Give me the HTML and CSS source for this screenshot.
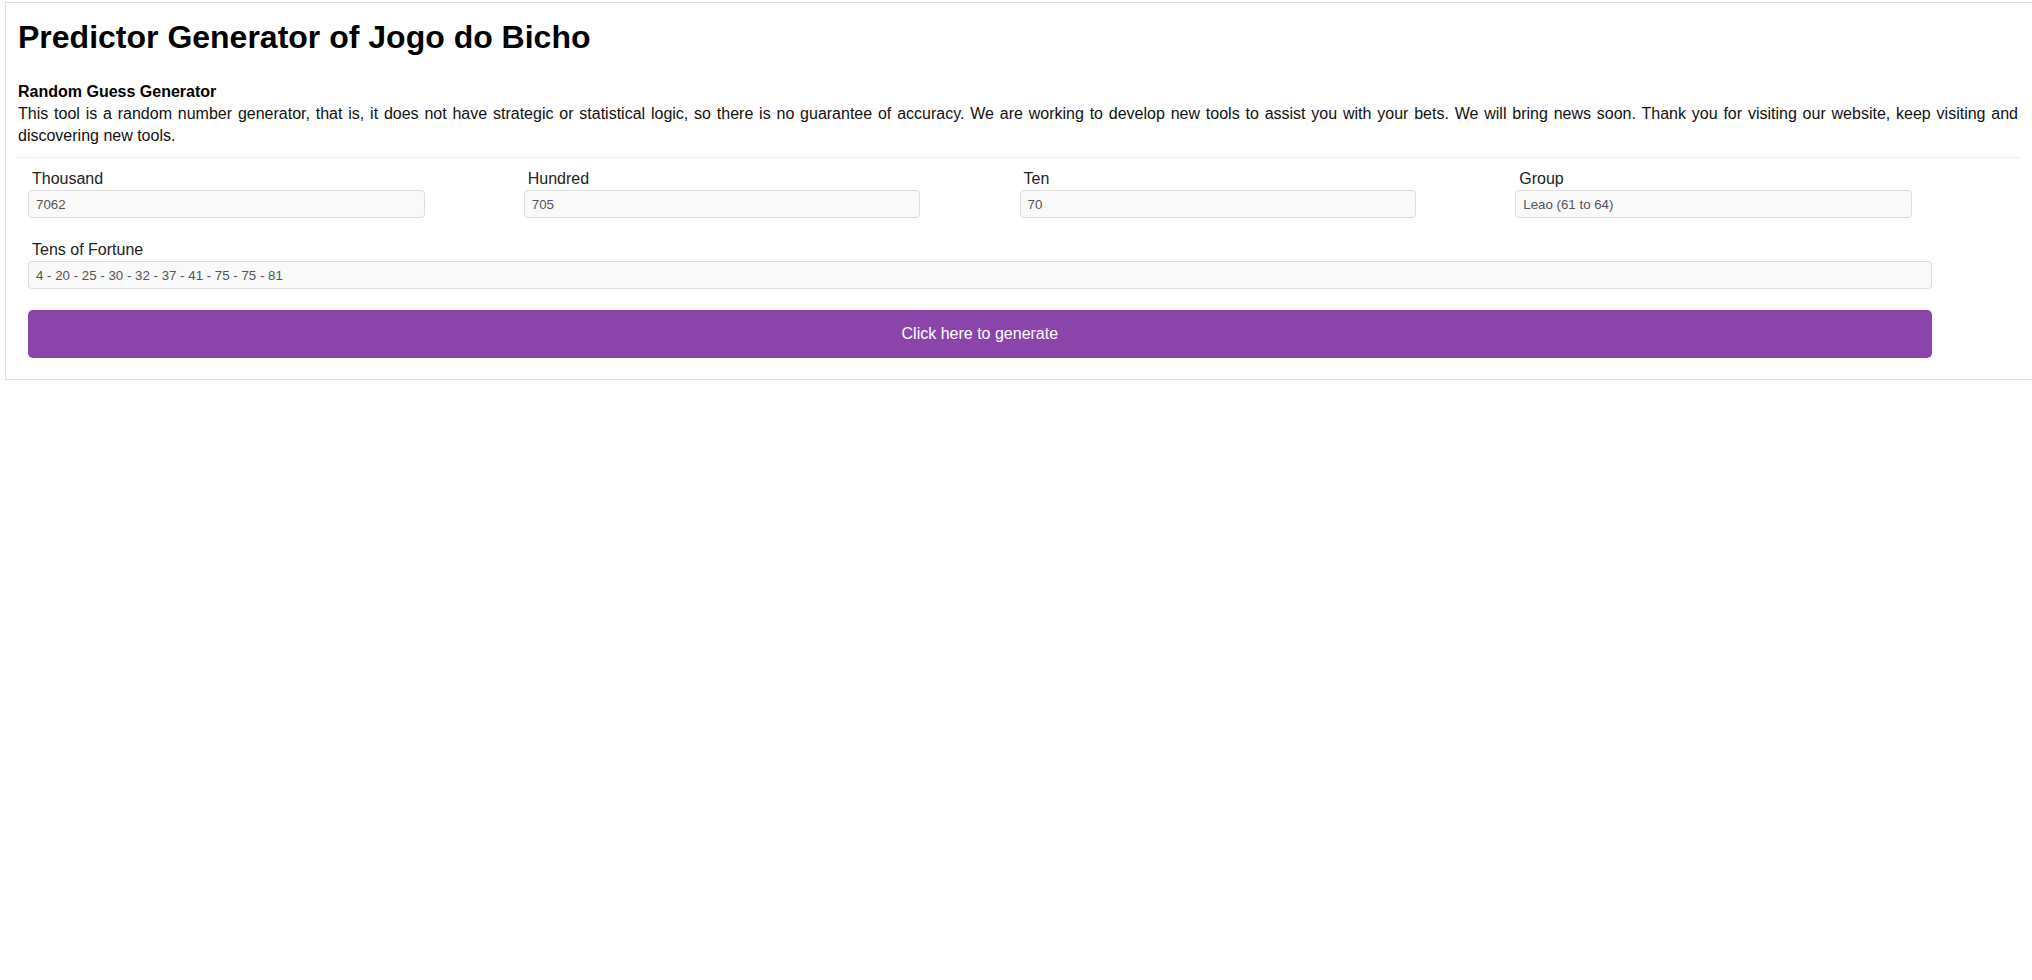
FILE: index.html
```html
<!DOCTYPE html>
<html lang="en">
<head>
<meta charset="utf-8">
<title>Predictor Generator of Jogo do Bicho</title>
<link rel="stylesheet" href="styles.css">
</head>
<body>
<div class="box">
  <h1 class="title">Predictor Generator of Jogo do Bicho</h1>
  <p class="intro"><strong>Random Guess Generator</strong><br>This tool is a random number generator, that is, it does not have strategic or statistical logic, so there is no guarantee of accuracy. We are working to develop new tools to assist you with your bets. We will bring news soon. Thank you for visiting our website, keep visiting and discovering new tools.</p>
  <hr class="sep">
  <form class="form" onsubmit="return false">
    <div class="row four">
      <div class="field">
        <label class="label">Thousand</label>
        <input class="input" type="text" value="7062" readonly>
      </div>
      <div class="field">
        <label class="label">Hundred</label>
        <input class="input" type="text" value="705" readonly>
      </div>
      <div class="field">
        <label class="label">Ten</label>
        <input class="input" type="text" value="70" readonly>
      </div>
      <div class="field">
        <label class="label">Group</label>
        <input class="input" type="text" value="Leao (61 to 64)" readonly>
      </div>
    </div>
    <div class="row">
      <div class="field wide">
        <label class="label">Tens of Fortune</label>
        <input class="input" type="text" value="4 - 20 - 25 - 30 - 32 - 37 - 41 - 75 - 75 - 81" readonly>
      </div>
    </div>
    <button class="btn" type="button">Click here to generate</button>
  </form>
</div>
</body>
</html>
```

FILE: styles.css
```css
html, body {
  margin: 0;
  padding: 0;
  background: #fff;
}

body {
  font-family: "Liberation Sans", Arial, sans-serif;
  color: #111;
  overflow-x: hidden;
}

.box {
  margin: 2px 0 0 5px;
  border: 1px solid #ddd;
  border-right: 0;
  padding: 16px 11px 21px 9px;
}

.title {
  margin: 0 0 25px;
  padding: 0 3px;
  font-size: 32px;
  line-height: 37px;
  font-weight: bold;
  color: #000;
}

.intro {
  margin: 0;
  padding: 0 3px;
  font-size: 16px;
  line-height: 22px;
  text-align: justify;
  color: #111;
}

.intro strong {
  color: #000;
}

.sep {
  margin: 10px 0 10px;
  border: 0;
  border-top: 1px solid #eee;
  height: 0;
}

.form {
  padding: 0 10px 0 13px;
}

.row {
  margin-bottom: 21px;
}

.four {
  display: grid;
  grid-template-columns: repeat(4, 1fr);
}

.field {
  display: flex;
  flex-direction: column;
}

.label {
  display: block;
  padding-left: 4px;
  font-size: 16px;
  line-height: 21px;
  margin-bottom: 1px;
  color: #222;
}

.input {
  box-sizing: border-box;
  width: 80%;
  height: 28px;
  margin: 0;
  padding: 0 7px;
  border: 1px solid #ddd;
  border-radius: 4px;
  background: #f9f9f9;
  font-family: "Liberation Sans", Arial, sans-serif;
  font-size: 13.3px;
  color: #555;
  outline: none;
}

.wide .input {
  width: 96%;
}

.btn {
  display: block;
  box-sizing: border-box;
  width: 96%;
  height: 48px;
  margin: 0;
  padding: 0;
  border: 0;
  border-radius: 5px;
  background: #8a44aa;
  color: #fff;
  font-family: "Liberation Sans", Arial, sans-serif;
  font-size: 16px;
  cursor: pointer;
}
```
